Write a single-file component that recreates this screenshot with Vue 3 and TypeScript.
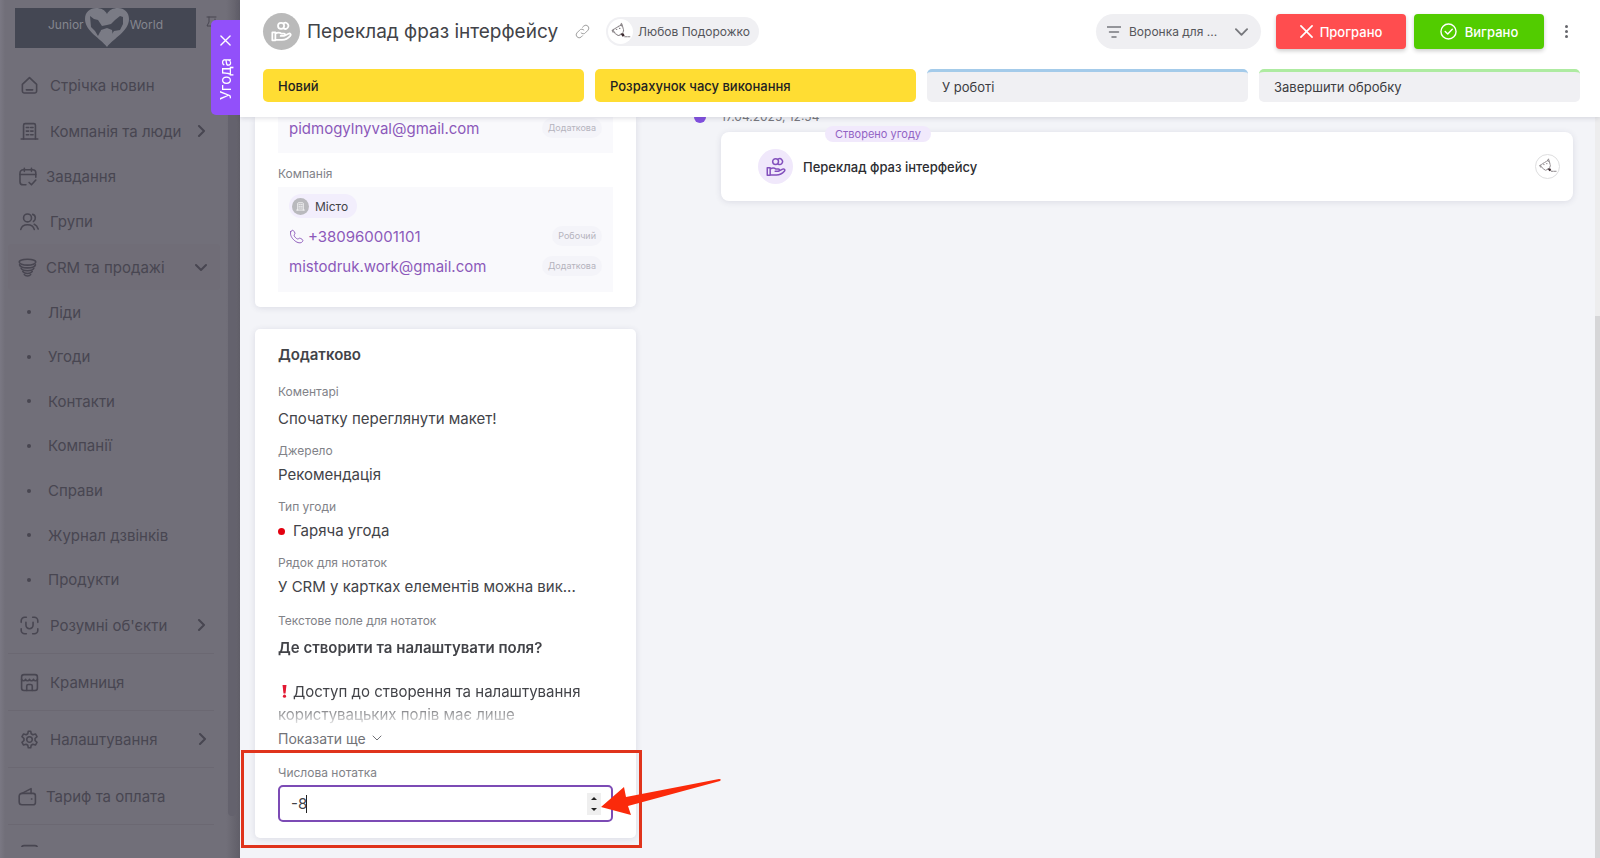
<script setup lang="ts">
import { ref } from 'vue'

interface MenuItem {
  label: string
  icon: string[]
  arrow?: 'right' | 'down'
  near?: boolean
}

const icons: Record<string, string[]> = {
  home: ['M3 10.500 12 2l9 8.500V19a2.500 2.500 0 0 1-2.500 2.500h-13A2.500 2.500 0 0 1 3 19z', 'M8 17.500h8'],
  building: ['M4.500 21.500V4A2 2 0 0 1 6.500 2h11a2 2 0 0 1 2 2v17.500', 'M1.500 21.500h21', 'M8 7h3M13.500 7h3M8 11.500h3M13.500 11.500h3M8 16h3M13.500 16h3'],
  calendar: ['M8 1.500v4M17 1.500v4', 'M2.500 9.500h20', 'M10 22.500H6.500A4 4 0 0 1 2.500 18.500v-11a4 4 0 0 1 4-4h12a4 4 0 0 1 4 4V13', 'M14 19.500l3 3 5.500-6'],
  people: ['M9.500 2.500a5 5 0 1 0 0 10a5 5 0 1 0 0-10', 'M1 22c1-4 4.500-6 8.500-6s7.500 2 8.500 6', 'M16 3c4 1 4.500 7 1 9', 'M18 15.500c2.500 1 4 3 5 6'],
  funnel: ['M12 1.500c6 0 10.500 1.700 10.500 3.700S18 9 12 9S1.500 7.200 1.500 5.200S6 1.500 12 1.500', 'M2 8.500c.6 2.700 4.800 4 10 4S21.400 11.200 22 8.500', 'M4 13c1 2.200 4 3 8 3s7-.8 8-3', 'M6 17c1 1.700 3 2.500 6 2.500s5-.8 6-2.500', 'M8 21c1 1.300 2 1.700 4 1.700s3-.4 4-1.700'],
  smart: ['M1.500 8V6A4.500 4.500 0 0 1 6 1.500h2M16 1.500h2A4.500 4.500 0 0 1 22.500 6v2M22.500 16v2a4.500 4.500 0 0 1-4.500 4.500h-2M8 22.500H6A4.500 4.500 0 0 1 1.500 18v-2', 'M7.500 8v3.500a4.500 4.500 0 0 0 9 0V8'],
  shop: ['M5 2h14a3 3 0 0 1 3 3v14a3 3 0 0 1-3 3H5a3 3 0 0 1-3-3V5a3 3 0 0 1 3-3z', 'M2 8c1 2.500 4 2.500 5 0c1 2.500 4 2.500 5 0c1 2.500 4 2.500 5 0c1 2.500 4 2.500 5 0', 'M8.500 22v-5.500a2 2 0 0 1 2-2h3a2 2 0 0 1 2 2V22'],
  gear: ['M9.800 4.800 10.500 1.500h3l.7 3.300 2 1.200 3.300-1 2 3.400-2.500 2.400v2.400l2.500 2.400-2 3.400-3.300-1-2 1.200-.7 3.300h-3l-.7-3.300-2-1.200-3.300 1-2-3.400L5 13.200v-2.400L2.500 8.400l2-3.400 3.300 1z', 'M12 8.500a3.500 3.500 0 1 0 0 7a3.500 3.500 0 1 0 0-7'],
  wallet: ['M5 8h14a3 3 0 0 1 3 3v8.500a3 3 0 0 1-3 3H5a3.500 3.500 0 0 1-3.500-3.500v-7.500A3.500 3.500 0 0 1 5 8z', 'M5 8l11.500-6v6', 'M17 15.200h.5'],
  video: ['M5 2h14a3 3 0 0 1 3 3v14a3 3 0 0 1-3 3H5a3 3 0 0 1-3-3V5a3 3 0 0 1 3-3z', 'M9 11V6h6v5'],
}

const mainMenu: MenuItem[] = [
  { label: 'Стрічка новин', icon: icons.home },
  { label: 'Компанія та люди', icon: icons.building, arrow: 'right' },
  { label: 'Завдання', icon: icons.calendar, near: true },
  { label: 'Групи', icon: icons.people },
  { label: 'CRM та продажі', icon: icons.funnel, arrow: 'down', near: true },
]
const crmMenu = ['Ліди', 'Угоди', 'Контакти', 'Компанії', 'Справи', 'Журнал дзвінків', 'Продукти']
const serviceMenu: MenuItem[] = [
  { label: 'Крамниця', icon: icons.shop },
  { label: 'Налаштування', icon: icons.gear, arrow: 'right' },
  { label: 'Тариф та оплата', icon: icons.wallet, near: true },
  { label: 'Відео', icon: icons.video },
]

const stages = [
  { label: 'Новий', tone: 'done' },
  { label: 'Розрахунок часу виконання', tone: 'done' },
  { label: 'У роботі', tone: 'blue' },
  { label: 'Завершити обробку', tone: 'green' },
]

const funnel = ref('Воронка для ...')
const amount = ref(-8)
</script>

<template>
  <div class="app">
    <aside class="sidebar">
      <div class="brand">
        <span>Junior</span>
        <svg class="heart" viewBox="0 0 44 40" aria-hidden="true">
          <path d="M22 39C15 30 0 23 0 11 0 4 5 0 11 0c5 0 9 2 11 6 2-4 6-6 11-6 6 0 11 4 11 11 0 12-15 19-22 28z" fill="#7a7b85" />
          <path d="M5 8l4 3 4 1 4 6 5-1 4-1 4-4 5-4 3 1 0 7-3 6-6 1-2 3-3-3-5-1-4 2-2 4-3-5-4-4z" fill="#444753" />
          <path d="M22 37c-2-3-5-5-8-8l2-7 6-2 5 2 1 7c-1 3-4 5-6 8z" fill="#7a7b85" />
        </svg>
        <span>World</span>
      </div>
      <svg class="pin" viewBox="0 0 12 12" aria-hidden="true"><path d="M1 1h9M3 1v5l-2 4h8M9 3v2" /></svg>
      <nav class="menu">
        <a v-for="item in mainMenu" :key="item.label" href="#" class="row" :class="{ near: item.near, open: item.arrow === 'down' }">
          <svg class="ico" viewBox="0 0 24 24" aria-hidden="true"><path v-for="d in item.icon" :key="d" :d="d" /></svg>
          <span>{{ item.label }}</span>
          <svg v-if="item.arrow" class="chev" :class="{ turned: item.arrow === 'down' }" viewBox="0 0 12 12" aria-hidden="true"><path d="M4 1l5 5-5 5" /></svg>
        </a>
        <div class="submenu">
          <a v-for="label in crmMenu" :key="label" href="#">{{ label }}</a>
        </div>
        <a href="#" class="row">
          <svg class="ico" viewBox="0 0 24 24" aria-hidden="true"><path v-for="d in icons.smart" :key="d" :d="d" /></svg>
          <span>Розумні об'єкти</span>
          <svg class="chev" viewBox="0 0 12 12" aria-hidden="true"><path d="M4 1l5 5-5 5" /></svg>
        </a>
        <div class="service">
          <a v-for="item in serviceMenu" :key="item.label" href="#" class="row" :class="{ near: item.near }">
            <svg class="ico" viewBox="0 0 24 24" aria-hidden="true"><path v-for="d in item.icon" :key="d" :d="d" /></svg>
            <span>{{ item.label }}</span>
            <svg v-if="item.arrow" class="chev" viewBox="0 0 12 12" aria-hidden="true"><path d="M4 1l5 5-5 5" /></svg>
          </a>
        </div>
      </nav>
      <div class="side-scroll"></div>
    </aside>

    <main class="panel">
      <button class="tab" type="button">
        <svg viewBox="0 0 12 12" aria-hidden="true"><path d="M1 1l10 10M11 1L1 11" /></svg>
        <span>Угода</span>
      </button>

      <header class="head">
        <div class="title-row">
          <span class="deal-icon">
            <svg viewBox="0 0 24 24" aria-hidden="true">
              <circle cx="11.500" cy="5.500" r="3.500" /><path d="M14.500 2.500a3.500 3.500 0 1 1 0 6" />
              <path d="M1.500 13h3.500v9H1.500zM5 14.500c3-2 5-1.500 7 0h3c1.500 0 1.500 2.500 0 2.500h-4M16 16.500l4-2c2-.8 3.300 1 2 2.500-2.500 3-6 4.500-9.500 4.500H5" />
            </svg>
          </span>
          <h1>Переклад фраз інтерфейсу</h1>
          <svg class="link-icon" viewBox="0 0 16 16" aria-hidden="true">
            <path d="M6.500 9.500a3 3 0 0 0 4.500 0l3-3a3.200 3.200 0 0 0-4.500-4.500L8 3.500M9.500 6.500a3 3 0 0 0-4.500 0l-3 3A3.200 3.200 0 0 0 6.500 14L8 12.500" />
          </svg>
          <span class="owner">
            <span class="avatar">
              <svg viewBox="0 0 24 24" aria-hidden="true"><path class="face" d="M4 11l3-2 5-3 2 1 1 4-1 3-4 2-3-2-2-3M12 6l1-2 1 3M4 11l1 2M8 10h.5M11 9h.5" /><path class="scarf" d="M12 14l3 0 1 2-2 1z" /><path class="face" d="M16 17h5" /></svg>
            </span>
            Любов Подорожко
          </span>
          <div class="funnel">
            <svg class="lines" viewBox="0 0 14 12" aria-hidden="true"><path d="M0 1h14M2.500 6h9M5 11h4" /></svg>
            <select v-model="funnel" aria-label="Воронка"><option>Воронка для ...</option></select>
            <svg class="down" viewBox="0 0 14 8" aria-hidden="true"><path d="M1 1l6 6 6-6" /></svg>
          </div>
          <button class="btn lost" type="button">
            <svg viewBox="0 0 14 14" aria-hidden="true"><path d="M1 1l12 12M13 1L1 13" /></svg>Програно
          </button>
          <button class="btn won" type="button">
            <svg viewBox="0 0 18 18" aria-hidden="true"><circle cx="9" cy="9" r="8" /><path d="M5.500 9l2.700 2.700 4.800-5" /></svg>Виграно
          </button>
          <button class="more" type="button" aria-label="Ще"><i></i><i></i><i></i></button>
        </div>
        <div class="stages">
          <button v-for="s in stages" :key="s.label" type="button" :class="s.tone">{{ s.label }}</button>
        </div>
      </header>

      <div class="content">
        <div class="left">
          <section class="card contacts">
            <div class="box first">
              <div class="line"><a href="#">pidmogylnyval@gmail.com</a><span class="kind">Додаткова</span></div>
            </div>
            <p class="label">Компанія</p>
            <div class="box">
              <span class="company">
                <span class="dot"><svg viewBox="0 0 24 24" aria-hidden="true"><path v-for="d in icons.building" :key="d" :d="d" /></svg></span>Місто
              </span>
              <div class="line">
                <a href="#"><svg class="phone" viewBox="0 0 16 16" aria-hidden="true"><path d="M2 2.500C3 1 4.500 1 5.200 2.300L6.300 4.200C6.800 5.500 5 6 5.500 7.200C6.300 8.800 7.500 10 9 10.600C10.200 11 10.600 9.300 12 9.900L14 11C15.300 11.800 15 13.200 13.500 14.200C11.500 15.500 8 14.500 5 11.500S.800 5 2 2.500z" /></svg>+380960001101</a>
                <span class="kind">Робочий</span>
              </div>
              <div class="line"><a href="#">mistodruk.work@gmail.com</a><span class="kind">Додаткова</span></div>
            </div>
          </section>

          <section class="card extra">
            <h2>Додатково</h2>
            <p class="label">Коментарі</p>
            <p class="value tall">Спочатку переглянути макет!</p>
            <p class="label">Джерело</p>
            <p class="value">Рекомендація</p>
            <p class="label">Тип угоди</p>
            <p class="value hot">Гаряча угода</p>
            <p class="label">Рядок для нотаток</p>
            <p class="value">У CRM у картках елементів можна вик...</p>
            <p class="label text-label">Текстове поле для нотаток</p>
            <div class="note">
              <strong>Де створити та налаштувати поля?</strong>
              <p>
                <svg class="bang" viewBox="0 0 5 13" aria-hidden="true"><path d="M.5 0h4L3.500 8.500h-2z" /><circle cx="2.500" cy="11.200" r="1.600" /></svg>Доступ до створення та налаштування користувацьких полів має лише
              </p>
            </div>
            <button class="show-more" type="button">Показати ще
              <svg viewBox="0 0 10 6" aria-hidden="true"><path d="M1 1l4 4 4-4" /></svg>
            </button>
            <div class="number-field">
              <label class="label" for="amount">Числова нотатка</label>
              <div class="input-wrap">
                <input id="amount" v-model="amount" type="number" />
                <span class="caret"></span>
                <span class="spin">
                  <button type="button" aria-label="Більше" @click="amount++"><svg viewBox="0 0 6 3" aria-hidden="true"><path d="M0 3l3-3 3 3z" /></svg></button>
                  <button type="button" aria-label="Менше" @click="amount--"><svg viewBox="0 0 6 3" aria-hidden="true"><path d="M0 0l3 3 3-3z" /></svg></button>
                </span>
              </div>
              <div class="frame"></div>
              <svg class="arrow" viewBox="0 0 120 38" aria-hidden="true"><path d="M0 28L23 8l2 10L118 0q3 0 1 2L27 27l3 9z" /></svg>
            </div>
          </section>
        </div>

        <section class="timeline">
          <div class="date">17.04.2025, 12:54</div>
          <article class="card event">
            <span class="badge">Створено угоду</span>
            <span class="event-icon">
              <svg viewBox="0 0 24 24" aria-hidden="true">
                <circle cx="11.500" cy="5.500" r="3.500" /><path d="M14.500 2.500a3.500 3.500 0 1 1 0 6" />
                <path d="M1.500 13h3.500v9H1.500zM5 14.500c3-2 5-1.500 7 0h3c1.500 0 1.500 2.500 0 2.500h-4M16 16.500l4-2c2-.8 3.300 1 2 2.500-2.500 3-6 4.500-9.500 4.500H5" />
              </svg>
            </span>
            <h3>Переклад фраз інтерфейсу</h3>
            <span class="avatar">
              <svg viewBox="0 0 24 24" aria-hidden="true"><path class="face" d="M4 11l3-2 5-3 2 1 1 4-1 3-4 2-3-2-2-3M12 6l1-2 1 3M4 11l1 2M8 10h.5M11 9h.5" /><path class="scarf" d="M12 14l3 0 1 2-2 1z" /><path class="face" d="M16 17h5" /></svg>
            </span>
          </article>
        </section>
        <div class="page-scroll"></div>
      </div>
    </main>
  </div>
</template>

<style>
body { margin: 0; background: #f3f4f8; }
</style>

<style scoped>
* { box-sizing: border-box; }
.app { display: flex; height: 100vh; overflow: hidden; font-family: Inter, "Liberation Sans", sans-serif; color: #424348; font-size: 15px; }
h1, h2, h3, p { margin: 0; font-weight: 400; }
a { text-decoration: none; color: inherit; }
button { font-family: inherit; border: 0; padding: 0; background: none; color: inherit; cursor: pointer; }
svg { fill: none; stroke: currentColor; flex: none; stroke-linecap: round; stroke-linejoin: round; }

.sidebar { position: relative; flex: 0 0 240px; background: linear-gradient(90deg, #7a7883 0, #716f79 5px, #716f79 226px, #65636d 236px, #605e68 240px); color: #484651; padding-top: 8px; }
.brand { width: 181px; height: 40px; margin-left: 15px; background: #444753; color: #85868f; display: flex; align-items: center; justify-content: center; gap: 1px; font-size: 13px; line-height: 16px; padding-bottom: 7px; font-size: 12px; }
.heart { width: 44px; height: 40px; stroke: none; margin-bottom: -7px; }
.pin { position: absolute; left: 206px; top: 16px; width: 12px; height: 12px; stroke-width: 1; }
.menu { position: absolute; top: 62px; left: 0; right: 0; bottom: 11px; overflow: hidden; }
.row { display: flex; align-items: center; gap: 11px; height: 46px; padding: 0 33px 0 20px; font-size: 15px; }
.row.near, .near + .row { height: 45px; }
.row.near { padding-left: 18px; gap: 9px; }
.row span { flex: 1; white-space: nowrap; }
.row.open { height: 46px; margin: 0 20px 0 8px; padding: 0 13px 0 10px; background: #706d77; border-radius: 4px; }
.ico { width: 19px; height: 19px; stroke-width: 2; }
.chev { width: 12px; height: 12px; stroke-width: 2; }
.chev.turned { transform: rotate(90deg); }
.submenu { display: grid; grid-auto-rows: 1fr; height: 312px; }
.submenu a { display: flex; align-items: center; gap: 17px; padding-left: 27px; }
.submenu a::before { content: ''; width: 4px; height: 4px; border-radius: 50%; background: currentColor; }
.service { margin-top: 5px; }
.service .row { height: 57px; margin: 0 26px 0 8px; padding: 0 6px 0 12px; border-top: 1px solid #6b6872; }
.service .row.near { padding-left: 10px; }
.side-scroll { position: absolute; right: 4px; top: 110px; bottom: 42px; width: 8px; border-radius: 4px; background: #64626d; }

.panel { position: relative; flex: 1; min-width: 0; display: flex; flex-direction: column; background: #f3f4f8; }
.tab { position: absolute; z-index: 4; right: 100%; top: 20px; width: 29px; height: 95px; background: #9250fa; color: #fff; border-radius: 5px 0 0 5px; display: flex; flex-direction: column; align-items: center; justify-content: space-between; padding: 15px 0; }
.tab svg { width: 11px; height: 11px; stroke-width: 1.500; }
.tab span { writing-mode: vertical-rl; transform: rotate(180deg); font-size: 15px; line-height: 18px; }

.head { position: relative; z-index: 2; background: #fff; padding: 13px 20px 15px 23px; box-shadow: 0 1px 5px rgba(60, 60, 90, .18); }
.title-row { display: flex; align-items: center; height: 37px; }
.deal-icon { width: 37px; height: 37px; border-radius: 50%; background: #bababa; color: #fff; display: grid; place-items: center; }
.deal-icon svg { width: 21px; height: 21px; stroke-width: 2; }
h1 { margin-left: 7px; font-size: 19px; line-height: 26px; white-space: nowrap; }
.link-icon { width: 15px; height: 15px; color: #999; margin: 0 16px 0 17px; }
.owner { display: flex; align-items: center; gap: 5px; height: 29px; border-radius: 15px; background: #f0f0f3; padding: 0 9px 0 2px; font-size: 12px; color: #55565b; white-space: nowrap; }
.avatar { width: 25px; height: 25px; border-radius: 50%; background: #fff; flex: none; display: block; }
.avatar svg { display: block; width: 100%; height: 100%; }
.face { stroke: #8a8588; stroke-width: 1; stroke-dasharray: 2 1; }
.scarf { fill: #3c2a30; stroke: none; }
.funnel { position: relative; margin-left: auto; width: 165px; height: 35px; border-radius: 18px; background: #efeff2; color: #77787d; }
.funnel svg { position: absolute; pointer-events: none; top: 50%; transform: translateY(-50%); }
.lines { left: 11px; width: 14px; height: 12px; stroke-width: 1.500; }
.down { right: 13px; width: 13px; height: 8px; stroke-width: 2; }
.funnel select { appearance: none; width: 100%; height: 100%; border: 0; background: none; padding: 0 36px 0 33px; font-family: inherit; font-size: 12px; color: #55565b; }
.btn { display: flex; align-items: center; justify-content: center; width: 130px; height: 35px; border-radius: 4px; color: #fff; font-size: 13px; font-weight: 500; box-shadow: 0 2px 4px rgba(0, 0, 0, .2); }
.lost { margin-left: 15px; background: #ff4d4f; gap: 7px; }
.lost svg { width: 13px; height: 13px; stroke-width: 1.800; }
.won { margin-left: 8px; background: #52cc00; gap: 8px; }
.won svg { width: 17px; height: 17px; stroke-width: 1.500; }
.more { width: 20px; height: 24px; margin: 0 4px 0 12px; display: flex; flex-direction: column; align-items: center; justify-content: center; gap: 2px; }
.more i { width: 3px; height: 3px; border-radius: 50%; background: #66676c; }
.stages { display: grid; grid-template-columns: repeat(4, 1fr); gap: 11px; margin-top: 19px; }
.stages button { height: 33px; border-radius: 5px; text-align: left; padding: 0 15px; font-size: 13px; background: #f0f0f3; color: #3c3d42; }
.stages .done { background: #ffdd33; color: #222; font-weight: 500; }
.stages .blue { border-top: 3px solid #a4cbea; }
.stages .green { border-top: 3px solid #aeeba1; }

.content { position: relative; flex: 1; min-height: 0; overflow: hidden; display: grid; grid-template-columns: minmax(320px, 381px) minmax(0, 1fr); column-gap: 53px; padding: 0 27px 0 15px; }
.card { background: #fff; border-radius: 5px; box-shadow: 0 1px 6px rgba(50, 50, 90, .12); }
.contacts { border-radius: 0 0 5px 5px; padding: 0 23px 15px; height: 190px; }
.box { background: #f9f9fc; padding: 7px 11px 10px; height: 105px; }
.box.first { padding: 0 11px; height: 36px; }
.box.first .line { height: 22px; }
.line { display: flex; align-items: center; justify-content: space-between; height: 30px; color: #8c59ba; font-size: 15px; }
.line a { display: flex; align-items: center; gap: 4px; }
.phone { width: 15px; height: 15px; }
.kind { font-size: 9px; line-height: 20px; border-radius: 10px; padding: 0 6px; background: #f4f4f9; color: #b4b3bd; }
.label { display: block; font-size: 12px; line-height: 16px; color: #818288; }
.contacts .label { margin: 13px 0 5px; }
.company { display: flex; align-items: center; gap: 6px; width: fit-content; height: 24px; margin-bottom: 3px; border-radius: 12px; padding: 0 9px 0 3px; background: #f2eefc; font-size: 12px; }
.dot { width: 17px; height: 17px; border-radius: 50%; background: #b9b9bd; color: #fff; display: grid; place-items: center; }
.dot svg { width: 9px; height: 9px; stroke-width: 2; }

.extra { margin-top: 22px; padding: 14px 23px 16px; }
.extra h2 { font-size: 15px; line-height: 24px; font-weight: 600; margin-bottom: 17px; }
.value { line-height: 20px; margin: 6px 0 14px; white-space: nowrap; }
.value.tall { margin: 9px 0 14px; }
.hot::before { content: ''; display: inline-block; width: 7px; height: 7px; border-radius: 50%; background: #e3000f; margin-right: 8px; vertical-align: 1px; }
.text-label { margin-top: 16px; }
.note { margin-top: 7px; height: 98px; overflow: hidden; line-height: 23px; mask-image: linear-gradient(#000 64px, transparent 92px); }
.note strong { display: block; font-weight: 600; margin-bottom: 21px; white-space: nowrap; }
.bang { width: 5px; height: 13px; fill: #e21a33; stroke: none; margin: 0 6px 0 4px; vertical-align: -1px; }
.show-more { display: flex; align-items: center; gap: 6px; height: 18px; margin-top: -5px; margin-bottom: 18px; font-size: 14px; color: #717277; }
.show-more svg { width: 10px; height: 6px; }
.number-field { position: relative; }
.input-wrap { position: relative; margin-top: 4px; }
.input-wrap input { display: block; width: 100%; height: 37px; border: 2px solid #7c4bb5; border-radius: 5px; background: #fff; outline: 0; padding: 0 40px 0 11px; font-family: inherit; font-size: 15px; color: #424348; appearance: textfield; }
.input-wrap input::-webkit-inner-spin-button { appearance: none; margin: 0; }
.caret { position: absolute; left: 28px; top: 10px; width: 1px; height: 18px; background: #222; }
.spin { position: absolute; right: 12px; top: 8px; width: 14px; height: 22px; background: #efefef; display: grid; }
.spin button { display: grid; place-items: center; }
.spin svg { width: 6px; height: 3px; fill: #222; stroke: none; }
.frame { position: absolute; z-index: 1; left: -37px; right: -29px; top: -15px; bottom: -26px; border: 3px solid #e0341c; pointer-events: none; }
.arrow { position: absolute; z-index: 2; left: calc(100% - 12px); top: 14px; width: 120px; height: 38px; fill: #fb2a0b; stroke: none; }

.timeline { padding-left: 32px; }
.date { position: relative; margin-top: -9px; line-height: 18px; font-size: 12px; color: #77787d; }
.date::before { content: ''; position: absolute; left: -27px; top: 3px; width: 12px; height: 12px; border-radius: 50%; background: #8250e0; }
.event { position: relative; display: flex; align-items: center; height: 69px; margin-top: 6px; padding: 0 13px 0 37px; border-radius: 8px; }
.badge { position: absolute; left: 104px; top: -6px; line-height: 16px; font-size: 11px; border-radius: 8px; padding: 0 10px; background: #f1e9fc; color: #9163c4; }
.event-icon { width: 35px; height: 35px; border-radius: 50%; background: #f0e8fb; color: #8350bd; display: grid; place-items: center; }
.event-icon svg { width: 20px; height: 20px; stroke-width: 1.800; }
.event h3 { flex: 1; margin-left: 10px; font-size: 13px; font-weight: 500; color: #2c2d31; }
.event .avatar { border: 1px solid #dededf; }
.page-scroll { position: absolute; right: 0; top: 0; bottom: 0; width: 5px; background: linear-gradient(#ededee 199px, #d6d6d8 199px); }
</style>
